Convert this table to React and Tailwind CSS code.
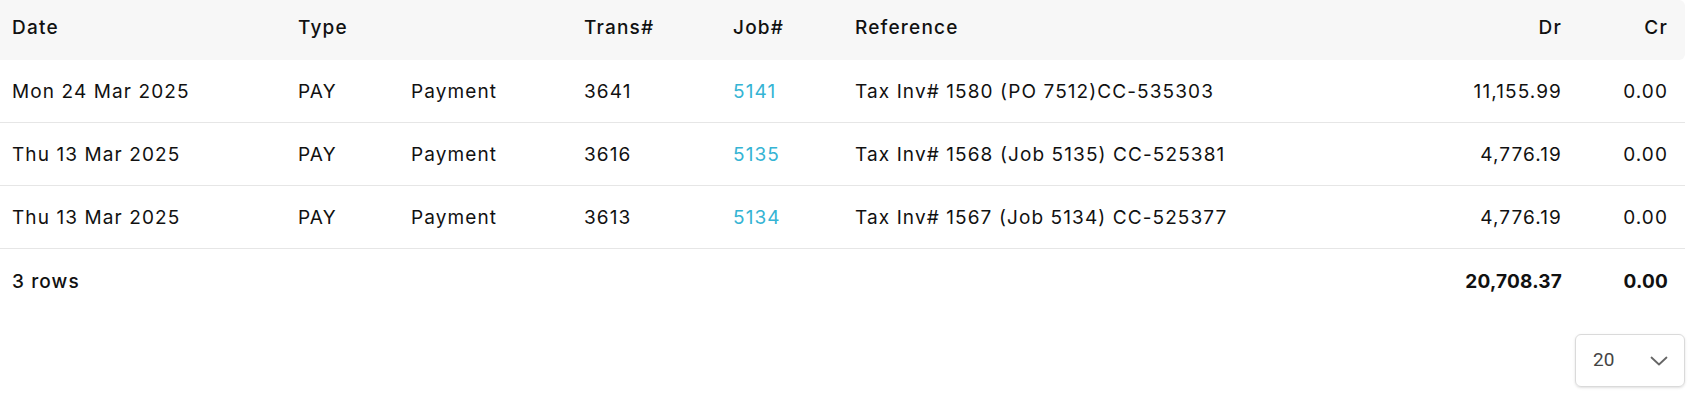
const rows = [
  { date: 'Mon 24 Mar 2025', type: 'PAY', desc: 'Payment', trans: '3641', job: '5141', ref: 'Tax Inv# 1580 (PO 7512)CC-535303', dr: '11,155.99', cr: '0.00' },
  { date: 'Thu 13 Mar 2025', type: 'PAY', desc: 'Payment', trans: '3616', job: '5135', ref: 'Tax Inv# 1568 (Job 5135) CC-525381', dr: '4,776.19', cr: '0.00' },
  { date: 'Thu 13 Mar 2025', type: 'PAY', desc: 'Payment', trans: '3613', job: '5134', ref: 'Tax Inv# 1567 (Job 5134) CC-525377', dr: '4,776.19', cr: '0.00' },
];

const cols = 'grid grid-cols-[286px_113px_173px_149px_122px_1fr_200px_111px] items-center';

export default function App() {
  return (
    <div className="w-[1689px] h-[400px] bg-white text-[#111] font-['Inter',sans-serif] text-[19px]">
      <div className="w-[1685px]">
        <div className={`${cols} h-[60px] pb-[3px] bg-[#f7f7f7] rounded-r-md font-medium tracking-[1.2px]`}>
          <div className="pl-3">Date</div>
          <div className="pl-3">Type</div>
          <div />
          <div className="pl-3">Trans#</div>
          <div className="pl-3">Job#</div>
          <div className="pl-3">Reference</div>
          <div className="pr-3 text-right">Dr</div>
          <div className="pr-[17px] text-right">Cr</div>
        </div>

        {rows.map((r, i) => (
          <div key={i} className={`${cols} h-[63px] pt-[3px] border-b border-[#e6e6e6] tracking-[1.1px]`}>
            <div className="pl-3">{r.date}</div>
            <div className="pl-3">{r.type}</div>
            <div className="pl-3">{r.desc}</div>
            <div className="pl-3">{r.trans}</div>
            <div className="pl-3 text-[#35b4d4]">{r.job}</div>
            <div className="pl-3 whitespace-nowrap">{r.ref}</div>
            <div className="pr-3 text-right">{r.dr}</div>
            <div className="pr-[17px] text-right">{r.cr}</div>
          </div>
        ))}

        <div className={`${cols} h-[63px] pt-[3px]`}>
          <div className="pl-3 font-medium tracking-[1.1px]">3 rows</div>
          <div />
          <div />
          <div />
          <div />
          <div />
          <div className="pr-3 text-right font-bold tracking-[0.2px]">20,708.37</div>
          <div className="pr-[17px] text-right font-bold tracking-[0.2px]">0.00</div>
        </div>

        <div className="flex justify-end mt-[22px]">
          <div className="w-[110px] h-[53px] flex items-center justify-between pl-[17px] pr-[16px] border border-[#dadada] rounded-md shadow-sm text-[#444] font-['Roboto',sans-serif]">
            <span>20</span>
            <svg width="18" height="10" viewBox="0 0 18 10" fill="none" stroke="#666" strokeWidth="1.8" strokeLinecap="round" strokeLinejoin="round">
              <path d="M1.5 1.5 L9 8.5 L16.5 1.5" />
            </svg>
          </div>
        </div>
      </div>
    </div>
  );
}
